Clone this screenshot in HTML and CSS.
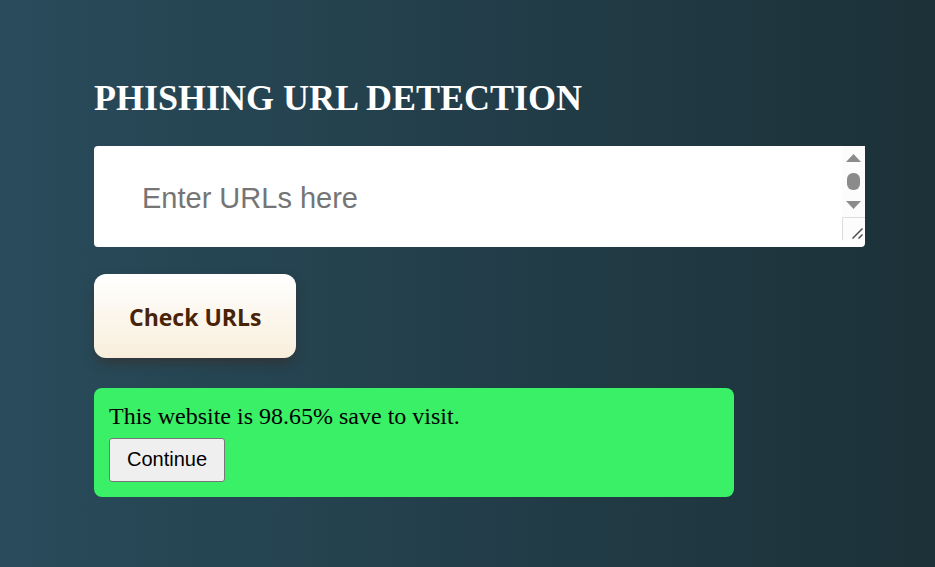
FILE: index.html
```html
<!DOCTYPE html>
<html lang="en">
<head>
<meta charset="utf-8">
<title>Phishing URL Detection</title>
<link rel="stylesheet" href="styles.css">
</head>
<body>
<main class="page">
  <h1 class="title">PHISHING URL DETECTION</h1>
  <form class="form">
    <div class="field">
      <textarea class="urls" rows="1" aria-label="URLs to check" placeholder="Enter URLs here"></textarea>
      <svg class="scrollbar" width="23" height="94" viewBox="0 0 23 94" aria-hidden="true">
        <rect width="23" height="94" fill="#fcfcfc"/>
        <path d="M4 16L11.500 8L19 16ZM4 55L11.500 63L19 55Z" fill="#8b8b8b"/>
        <rect x="5" y="27" width="13" height="17" rx="6" fill="#8b8b8b"/>
        <path d="M.5 94V71.500H23" fill="none" stroke="#dcdcdc"/>
        <path d="M10.500 92.500L20.500 82.500M16.500 92.500L20.500 88.500" fill="none" stroke="#4d4d4d" stroke-width="1.500"/>
      </svg>
    </div>
    <button class="check" type="button">Check URLs</button>
  </form>
  <section class="result">
    <p class="message">This website is 98.65% save to visit.</p>
    <button class="continue" type="button">Continue</button>
  </section>
</main>
</body>
</html>
```
FILE: styles.css
```css
* {
  box-sizing: border-box;
}

body {
  margin: 0;
  min-height: 100vh;
  background: linear-gradient(to right, #294b5b, #1c3138);
  font-family: "Liberation Serif", "Times New Roman", serif;
}

.page {
  padding: 76px 70px 70px 94px;
}

.title {
  margin: 0 0 26px;
  font-size: 36px;
  line-height: 44px;
  color: #fff;
}

.form {
  display: flex;
  flex-direction: column;
  align-items: flex-start;
  gap: 27px;
}

.field {
  position: relative;
  width: 100%;
  overflow: hidden;
  border-radius: 4px 0 4px 4px;
}

.urls {
  display: block;
  width: 100%;
  height: 101px;
  padding: 34px 48px;
  border: 0;
  resize: none;
  overflow: hidden;
  background: #fff;
  font: 29px/36px "Liberation Sans", Arial, sans-serif;
}

.urls::placeholder {
  color: #757575;
}

.scrollbar {
  position: absolute;
  top: 0;
  right: 0;
}

.check {
  padding: 25px 35px 23px;
  border: 0;
  border-radius: 12px;
  background: linear-gradient(#fff, #f8eedb);
  box-shadow: 0 6px 12px -2px rgba(61, 35, 20, 0.5);
  color: #482307;
  font: 700 23px/36px "Open Sans", "Noto Sans", sans-serif;
}

.result {
  width: 83%;
  margin-top: 30px;
  padding: 15px;
  border-radius: 8px;
  background: #3af066;
}

.message {
  margin: 0 0 8px;
  font-size: 24px;
  line-height: 27px;
  color: #000;
}

.continue {
  display: block;
  padding: 8px 17px 10px;
  border: 1px solid #767676;
  border-radius: 3px;
  background: #efefef;
  color: #000;
  font: 20px/24px "Liberation Sans", Arial, sans-serif;
}
```
